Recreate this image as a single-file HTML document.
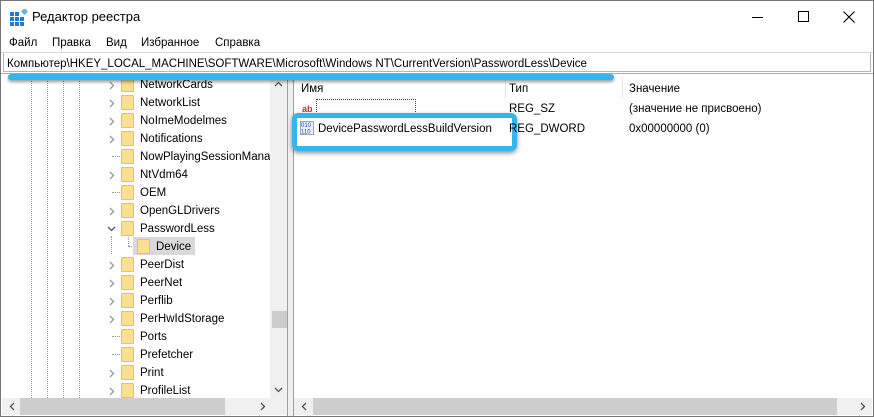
<!DOCTYPE html>
<html><head><meta charset="utf-8"><style>
*{margin:0;padding:0;box-sizing:border-box}
body{width:874px;height:417px;overflow:hidden;background:#fff;font-family:"Liberation Sans","Noto Sans CJK SC",sans-serif;font-size:11.5px;color:#000;position:relative}
.abs{position:absolute}
.win{left:0;top:0;width:874px;height:417px;border:1px solid #777}
.t{position:absolute;white-space:nowrap;line-height:14px;margin-top:1px}
.fold{position:absolute;width:13px;height:15px;background:#fbe08f;border:1px solid #e6c25a;border-radius:1px}
.vd{position:absolute;width:1px;border-left:1px dotted #999}
</style></head><body>
<div class="abs win"></div>
<svg class="abs" style="left:10px;top:9px" width="18" height="17" viewBox="0 0 18 17">
<g fill="#1f7bd0"><rect x="0" y="3" width="4" height="4"/><rect x="5" y="3" width="4" height="4"/><rect x="0" y="8" width="4" height="4"/><rect x="5" y="8" width="4" height="4"/><rect x="10" y="8" width="4" height="4"/><rect x="0" y="13" width="4" height="4"/><rect x="5" y="13" width="4" height="4"/><rect x="10" y="13" width="4" height="4"/></g>
<rect x="12" y="0" width="5" height="5" fill="#5fb4f0" transform="rotate(45 14.5 2.5)"/></svg>
<div class="t" style="left:32px;top:8px;font-size:13px;line-height:16px">Редактор реестра</div>
<div class="abs" style="left:752px;top:17px;width:11px;height:1px;background:#000"></div>
<div class="abs" style="left:798px;top:11px;width:11px;height:11px;border:1px solid #000"></div>
<svg class="abs" style="left:843px;top:11px" width="12" height="12"><path d="M0.5 0.5L11.5 11.5M11.5 0.5L0.5 11.5" stroke="#000" stroke-width="1.1"/></svg>
<div class="t" style="left:9px;top:35px">Файл</div>
<div class="t" style="left:52px;top:35px">Правка</div>
<div class="t" style="left:106px;top:35px">Вид</div>
<div class="t" style="left:141px;top:35px">Избранное</div>
<div class="t" style="left:215px;top:35px">Справка</div>
<div class="abs" style="left:1px;top:52px;width:872px;height:1px;background:#d8d8d8"></div>
<div class="abs" style="left:3px;top:53px;width:868px;height:19px;border:1px solid #b5b5b5;border-top:none;background:#fff"></div>
<div class="t" style="left:7px;top:56px">Компьютер\HKEY_LOCAL_MACHINE\SOFTWARE\Microsoft\Windows NT\CurrentVersion\PasswordLess\Device</div>
<div class="abs" style="left:1px;top:73px;width:872px;height:1px;background:#aaa"></div>
<div class="abs" style="left:287px;top:74px;width:7px;height:342px;background:#f0f0f0;border-left:1px solid #a0a0a0;border-right:1px solid #a0a0a0"></div>
<div class="abs" style="left:270px;top:74px;width:17px;height:324px;background:#f0f0f0"></div>
<div class="abs" style="left:272px;top:311px;width:15px;height:17px;background:#cdcdcd"></div>
<svg class="abs" style="left:274px;top:81px" width="9" height="6"><path d="M1 5L4.5 1.5L8 5" stroke="#555" stroke-width="1.3" fill="none"/></svg>
<svg class="abs" style="left:274px;top:387px" width="9" height="6"><path d="M1 1L4.5 4.5L8 1" stroke="#555" stroke-width="1.3" fill="none"/></svg>
<div class="abs" style="left:2px;top:398px;width:285px;height:17px;background:#f0f0f0"></div>
<div class="abs" style="left:20px;top:398px;width:205px;height:17px;background:#cdcdcd"></div>
<svg class="abs" style="left:9px;top:402px" width="6" height="9"><path d="M5 1L1.5 4.5L5 8" stroke="#555" stroke-width="1.3" fill="none"/></svg>
<svg class="abs" style="left:260px;top:402px" width="6" height="9"><path d="M1 1L4.5 4.5L1 8" stroke="#555" stroke-width="1.3" fill="none"/></svg>
<div class="vd" style="left:31px;top:74px;height:324px"></div>
<div class="vd" style="left:47px;top:74px;height:324px"></div>
<div class="vd" style="left:63px;top:74px;height:324px"></div>
<div class="vd" style="left:79px;top:74px;height:324px"></div>
<div class="vd" style="left:111px;top:236px;height:18px"></div>
<div class="abs" style="left:128px;top:246px;width:8px;border-top:1px dotted #999"></div>
<div class="vd" style="left:128px;top:237px;height:9px"></div>
<div class="abs" style="left:133px;top:237px;width:62px;height:18px;background:#d9d9d9"></div>
<div id="tree"></div>
<div class="abs" style="left:505px;top:78px;width:1px;height:20px;background:#e5e5e5"></div>
<div class="abs" style="left:622px;top:78px;width:1px;height:20px;background:#e5e5e5"></div>
<div class="t" style="left:301px;top:81px">Имя</div>
<div class="t" style="left:509px;top:81px">Тип</div>
<div class="t" style="left:629px;top:81px">Значение</div>
<div class="abs" style="left:316px;top:99px;width:100px;height:17px;border:1px dotted #444"></div>
<div class="t" style="left:302px;top:101px;color:#b33;font-size:9px;font-weight:bold">ab</div>
<div class="t" style="left:509px;top:101px">REG_SZ</div>
<div class="t" style="left:629px;top:101px">(значение не присвоено)</div>
<div class="abs" style="left:292px;top:113px;width:225px;height:38px;border:5px solid #36b5ec;border-radius:6px;box-shadow:0 2px 5px rgba(0,0,0,.45)"></div>
<svg class="abs" style="left:300px;top:121px" width="14" height="14"><rect x="0.5" y="0.5" width="13" height="13" fill="#eef" stroke="#9aa"/><text x="1" y="6" font-size="6" fill="#1547c0" font-family="Liberation Sans">010</text><text x="1" y="12.5" font-size="6" fill="#1547c0" font-family="Liberation Sans">110</text></svg>
<div class="t" style="left:318px;top:121px">DevicePasswordLessBuildVersion</div>
<div class="t" style="left:509px;top:121px">REG_DWORD</div>
<div class="t" style="left:629px;top:121px">0x00000000 (0)</div>
<div class="abs" style="left:294px;top:398px;width:578px;height:17px;background:#f0f0f0"></div>
<div class="abs" style="left:313px;top:398px;width:524px;height:17px;background:#cdcdcd"></div>
<svg class="abs" style="left:301px;top:402px" width="6" height="9"><path d="M5 1L1.5 4.5L5 8" stroke="#555" stroke-width="1.3" fill="none"/></svg>
<svg class="abs" style="left:860px;top:402px" width="6" height="9"><path d="M1 1L4.5 4.5L1 8" stroke="#555" stroke-width="1.3" fill="none"/></svg>
<div class="abs" style="left:8px;top:74px;width:606px;height:6px;background:#36b5ec;border-radius:3px;box-shadow:0 2px 3px rgba(0,0,0,.4)"></div>
<script>
var items=[["NetworkCards",1],["NetworkList",1],["NoImeModelmes",1],["Notifications",1],["NowPlayingSessionMana",0],["NtVdm64",1],["OEM",0],["OpenGLDrivers",1],["PasswordLess",2],["Device",3],["PeerDist",1],["PeerNet",1],["Perflib",1],["PerHwIdStorage",1],["Ports",0],["Prefetcher",0],["Print",1],["ProfileList",1]];
var h="";items.forEach(function(it,i){var y=75+i*18;var lvl=it[1]==3;var fx=lvl?137:121,tx=lvl?156:140;
if(it[1]==1)h+='<svg class="abs" style="left:109px;top:'+(y+6)+'px" width="6" height="9"><path d="M1 1L4.5 4.5L1 8" stroke="#999" stroke-width="1.3" fill="none"/></svg>';
if(it[1]==2)h+='<svg class="abs" style="left:107px;top:'+(y+7)+'px" width="9" height="6"><path d="M1 1L4.5 4.5L8 1" stroke="#555" stroke-width="1.3" fill="none"/></svg>';
if(it[1]==0)h+='<div class="abs" style="left:112px;top:'+(y+9)+'px;width:8px;border-top:1px dotted #999"></div>';
h+='<div class="fold" style="left:'+fx+'px;top:'+(y+2)+'px"></div>';
h+='<div class="t" style="left:'+tx+'px;top:'+(y+2)+'px;'+(it[0].length>20?'width:130px;overflow:hidden':'')+'">'+it[0]+'</div>';});
document.getElementById("tree").innerHTML=h;
</script>
</body></html>
